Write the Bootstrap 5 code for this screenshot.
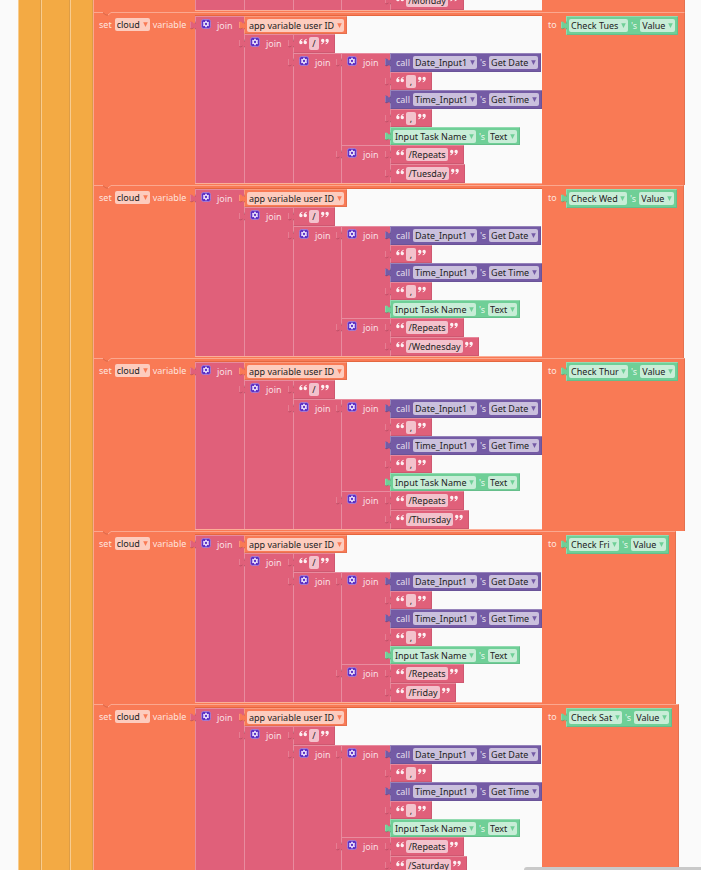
<!DOCTYPE html>
<html lang="en">
<head>
<meta charset="utf-8">
<meta name="viewport" content="width=device-width, initial-scale=1">
<title>Blocks workspace</title>
<link href="https://cdn.jsdelivr.net/npm/bootstrap@5.3.0/dist/css/bootstrap.min.css" rel="stylesheet">
<style>
  :root { --paper:#fafafa; --amber:#f3aa44; --orange:#f97a55; --pink:#e0607a; --violet:#745ba5; --green:#6fcf97; }
  body { font-family:"Noto Sans","Open Sans",sans-serif; font-size:9px; line-height:13px; background:var(--paper); color:#fff; }
  .workspace { padding-left:18px; }
  .rail { width:23px; background:var(--amber); border-left:1px solid #f8cc8e; border-right:1px solid #dd9d46; }
  .rail.wide { width:29px; }
  .clipped { height:12px; }
  .stmt { background:var(--orange); width:max-content; padding:3px 6px 2px 0; border-top:1px solid #fba88f; border-left:1px solid #fba88f; border-right:1px solid #e4714f; }
  .stmt > .notch { left:8px; top:-1px; width:10px; height:4px; }
  .lead-in { width:101px; height:17px; padding-left:5px; gap:3px; }
  .hole { background:var(--paper); box-shadow:0 -1px #e4673f, 0 1px #fcae97; }
  .tail { width:24px; height:17px; padding-left:6px; }
  .rest { width:347px; }
  .beyond { width:136px; }
  .say { color:rgba(255,255,255,.82); white-space:nowrap; }
  .join { background:var(--pink); box-shadow:inset 1px 1px rgba(255,255,255,.28); }
  .join-wrap { min-width:max-content; }
  .head { width:49px; height:18px; padding-left:6px; }
  .head.slim { width:48px; }
  .head .gear { width:10px; height:10px; margin-top:3px; margin-right:6px; }
  .head .say { margin-top:3px; }
  .blk { height:19px; width:max-content; padding:0 3px; gap:3px; box-shadow:inset 1px 1px rgba(255,255,255,.25), inset -1px -1px rgba(0,0,0,.08); }
  .blk.short { height:18px; }
  .blk.call { padding-left:6px; }
  .blk.text { padding:0 6px; gap:2px; }
  .orange { background:var(--orange); --ink:#f97a55; }
  .pink { background:var(--pink); --ink:#e0607a; }
  .violet { background:var(--violet); --ink:#745ba5; }
  .green { background:var(--green); --ink:#6fcf97; }
  .plug { left:-5px; top:5px; width:6px; height:9px; color:var(--ink); overflow:visible; }
  .field { height:13px; padding:0 2px; gap:2px; border-radius:2px; background:rgba(255,255,255,.62); }
  .field svg { width:5px; height:5px; color:var(--ink); pointer-events:none; }
  .field select, .entry { appearance:none; border:0; margin:0; padding:0; background:none; color:#222; font:inherit; line-height:13px; height:13px; }
  .field select:focus, .entry:focus { outline:1px solid #fff; }
  .entry { border-radius:2px; background:rgba(255,255,255,.62); text-align:center; }
  .quote { width:8px; height:7px; margin-bottom:4px; color:#fdf0f2; }
  .scroll-thumb { width:177px; height:3px; background:#c9c9c9; border-top-left-radius:3px; }
</style>
</head>
<body>
<svg class="d-none" aria-hidden="true">
  <symbol id="gear" viewBox="0 0 20 20">
    <rect x="1" y="1" width="18" height="18" rx="4" fill="#5b2fc4" stroke="#a58ae0" stroke-width="1.5"/>
    <g stroke="#e9e0fc" stroke-width="3.400"><path d="M10 3.500v13M4.400 6.800l11.200 6.400M4.400 13.200l11.200-6.400"/></g>
    <circle cx="10" cy="10" r="4.600" fill="#e9e0fc"/><circle cx="10" cy="10" r="2.300" fill="#5b2fc4"/>
  </symbol>
  <symbol id="open" viewBox="0 0 14 12">
    <path fill="currentColor" d="M6 1C3 1.500.3 4 .3 7.700a3 3 0 1 0 3-3C3.700 3.700 4.500 2.900 6 2.400zM13.700 1C10.700 1.500 8 4 8 7.700a3 3 0 1 0 3-3C11.400 3.700 12.200 2.900 13.700 2.400z"/>
  </symbol>
  <symbol id="plug" viewBox="0 0 6 9">
    <path fill="currentColor" d="M6 1.800 3.600 2.600C3 1.200 2.400.5 1 .5 0 .5 0 1 0 2v4.500C0 8 1.500 8.500 3 7.300l3 .4z"/>
    <path fill="none" stroke="#fff" stroke-opacity=".3" stroke-width=".8" d="M.3 1v6"/>
    <path fill="none" stroke="#000" stroke-opacity=".2" stroke-width=".8" d="M.5 7.600C2 8.200 2.800 7.400 3.500 7M5.500 2.500v-2M5.500 8.500V7"/>
  </symbol>
  <symbol id="tri" viewBox="0 0 5 5"><path fill="currentColor" d="M.2 .3h4.600L2.500 5z"/></symbol>
  <symbol id="notch" viewBox="0 0 10 4"><path fill="#f97a55" d="M1 0h8v1L7 3H4L1 1z"/><path fill="none" stroke="#d9694b" d="M1 .8 4 3h2"/><path fill="none" stroke="#fba88f" d="M6 3 9 .6"/></symbol>
</svg>

<main class="workspace d-flex vh-100 overflow-hidden position-relative">
  <div class="rail flex-shrink-0"></div>
  <div class="rail wide flex-shrink-0"></div>
  <div class="rail flex-shrink-0"></div>
  <div class="flex-grow-1" id="stack"></div>
  <div class="scroll-thumb position-absolute bottom-0 end-0"></div>
</main>

<script>
  const pen = document.createElement('canvas').getContext('2d');
  pen.font = '9px "Noto Sans","Open Sans",sans-serif';

  const icon = (id, cls) => `<svg class="${cls}" aria-hidden="true"><use href="#${id}"/></svg>`;
  const say = t => `<span class="say">${t}</span>`;
  const plug = icon('plug', 'plug position-absolute');
  const pick = (value, label) =>
    `<span class="field d-flex align-items-center"><select aria-label="${label}"><option>${value}</option></select>${icon('tri', '')}</span>`;
  const block = (kind, body) =>
    `<div class="blk ${kind} d-flex align-items-center position-relative">${plug}${body}</div>`;
  const quote = icon('open', 'quote');
  const unquote = `<svg class="quote" aria-hidden="true" viewBox="0 0 14 12"><g transform="rotate(180 7 6)"><use href="#open" width="14" height="12"/></g></svg>`;
  const text = (value, size = '') => block(`pink text ${size}`,
    `${quote}<input class="entry" type="text" aria-label="Text" value="${value}" style="width:${Math.max(10, Math.ceil(pen.measureText(value).width) + 4)}px">${unquote}`);
  const join = (rows, slim = '') =>
    `<div class="join-wrap d-flex"><div class="join position-relative" style="--ink:#e0607a">${plug}
      <div class="head ${slim} d-flex align-items-start">${icon('gear', 'gear flex-shrink-0')}${say('join')}</div></div>
      <div>${rows.join('')}</div></div>`;

  const key = day => join([
    block('orange short', pick('app variable user ID', 'Variable')),
    join([
      text('/'),
      join([
        join([
          block('violet call', say('call') + pick('Date_Input1', 'Component') + say("'s") + pick('Get Date', 'Method')),
          text(',', 'short'),
          block('violet call', say('call') + pick('Time_Input1', 'Component') + say("'s") + pick('Get Time', 'Method')),
          text(',', 'short'),
          block('green short', pick('Input Task Name', 'Component') + say("'s") + pick('Text', 'Property')),
        ]),
        join([text('/Repeats'), text('/' + day)]),
      ], 'slim'),
    ]),
  ]);

  const statement = (day, check) => `
    <section class="stmt d-flex align-items-start position-relative" aria-label="Set cloud variable for ${day}">
      ${icon('notch', 'notch position-absolute')}
      <div class="lead-in orange d-flex align-items-center">${say('set')}${pick('cloud', 'Storage')}${say('variable')}</div>
      <div class="hole">${key(day)}</div>
      <div class="tail d-flex align-items-center">${say('to')}</div>
      ${block('green', pick(check, 'Component') + say("'s") + pick('Value', 'Property'))}
    </section>`;

  // The statement scrolled off the top shows only its last row.
  const lastRow = day => `
    <section class="stmt d-flex" aria-label="Set cloud variable for ${day}">
      <div class="lead-in"></div>
      <div class="hole rest d-flex">${['', '', 'slim', ''].map(s => `<div class="join"><div class="head ${s}"></div></div>`).join('')}${text('/' + day)}</div>
      <div class="beyond"></div>
    </section>`;

  document.getElementById('stack').innerHTML =
    `<div class="clipped d-flex align-items-end overflow-hidden">${lastRow('Monday')}</div>` +
    [['Tuesday', 'Check Tues'], ['Wednesday', 'Check Wed'], ['Thursday', 'Check Thur'], ['Friday', 'Check Fri'], ['Saturday', 'Check Sat']]
      .map(([day, check]) => statement(day, check)).join('');
</script>
<script src="https://cdn.jsdelivr.net/npm/bootstrap@5.3.0/dist/js/bootstrap.bundle.min.js"></script>
</body>
</html>
